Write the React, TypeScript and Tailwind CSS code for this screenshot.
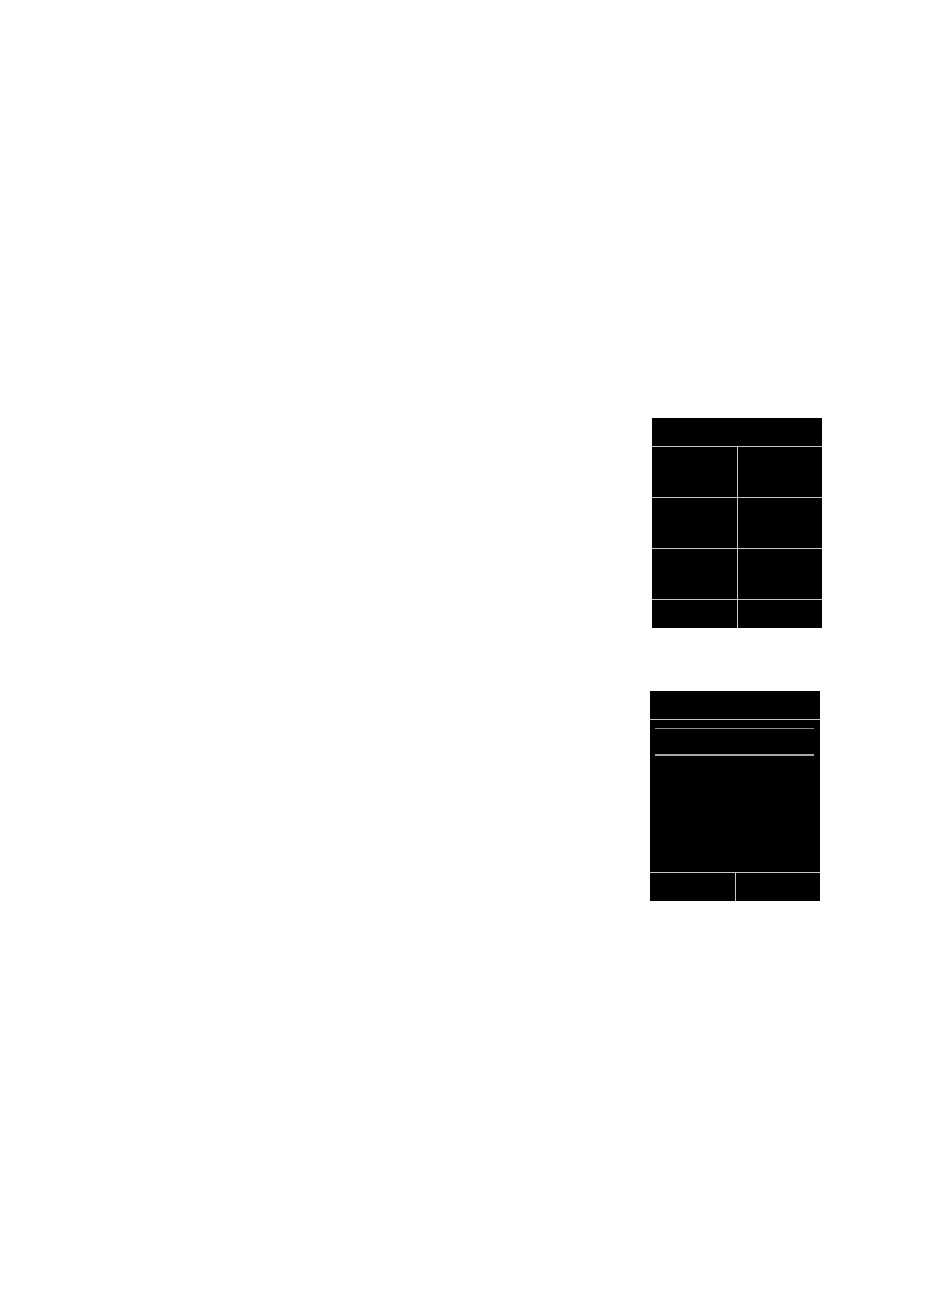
export default function App() {
  const rows = [0, 1, 2]

  return (
    <div className="min-h-[1304px] bg-white pt-[418px]" style={{ fontFamily: '"Liberation Sans", Arial, sans-serif' }}>
      {/* 上のパネル: グリッド */}
      <div className="ml-[652px] w-[170px] bg-black">
        <div className="h-[29px] border-b border-[#c8c8c8]" />
        {rows.map((r) => (
          <div key={r} className="flex h-[51px] border-b border-[#c8c8c8]">
            <div className="w-[86px] border-r border-[#c8c8c8]" />
            <div className="flex-1" />
          </div>
        ))}
        <div className="flex h-[28px]">
          <div className="w-[86px] border-r border-[#c8c8c8]" />
          <div className="flex-1" />
        </div>
      </div>

      {/* 下のパネル: リスト */}
      <div className="ml-[650px] mt-[63px] w-[170px] bg-black">
        <div className="h-[29px] border-b border-[#c8c8c8]" />
        <div className="h-[153px] border-b border-[#c8c8c8] pt-[8px]">
          <div className="ml-[5px] mr-[6px] h-px bg-[#8c8c8c]" />
          <div className="ml-[5px] mr-[6px] mt-[25px] h-[2px] bg-[#a6a6a6]" />
        </div>
        <div className="flex h-[28px]">
          <div className="w-[86px] border-r border-[#c8c8c8]" />
          <div className="flex-1" />
        </div>
      </div>
    </div>
  )
}
